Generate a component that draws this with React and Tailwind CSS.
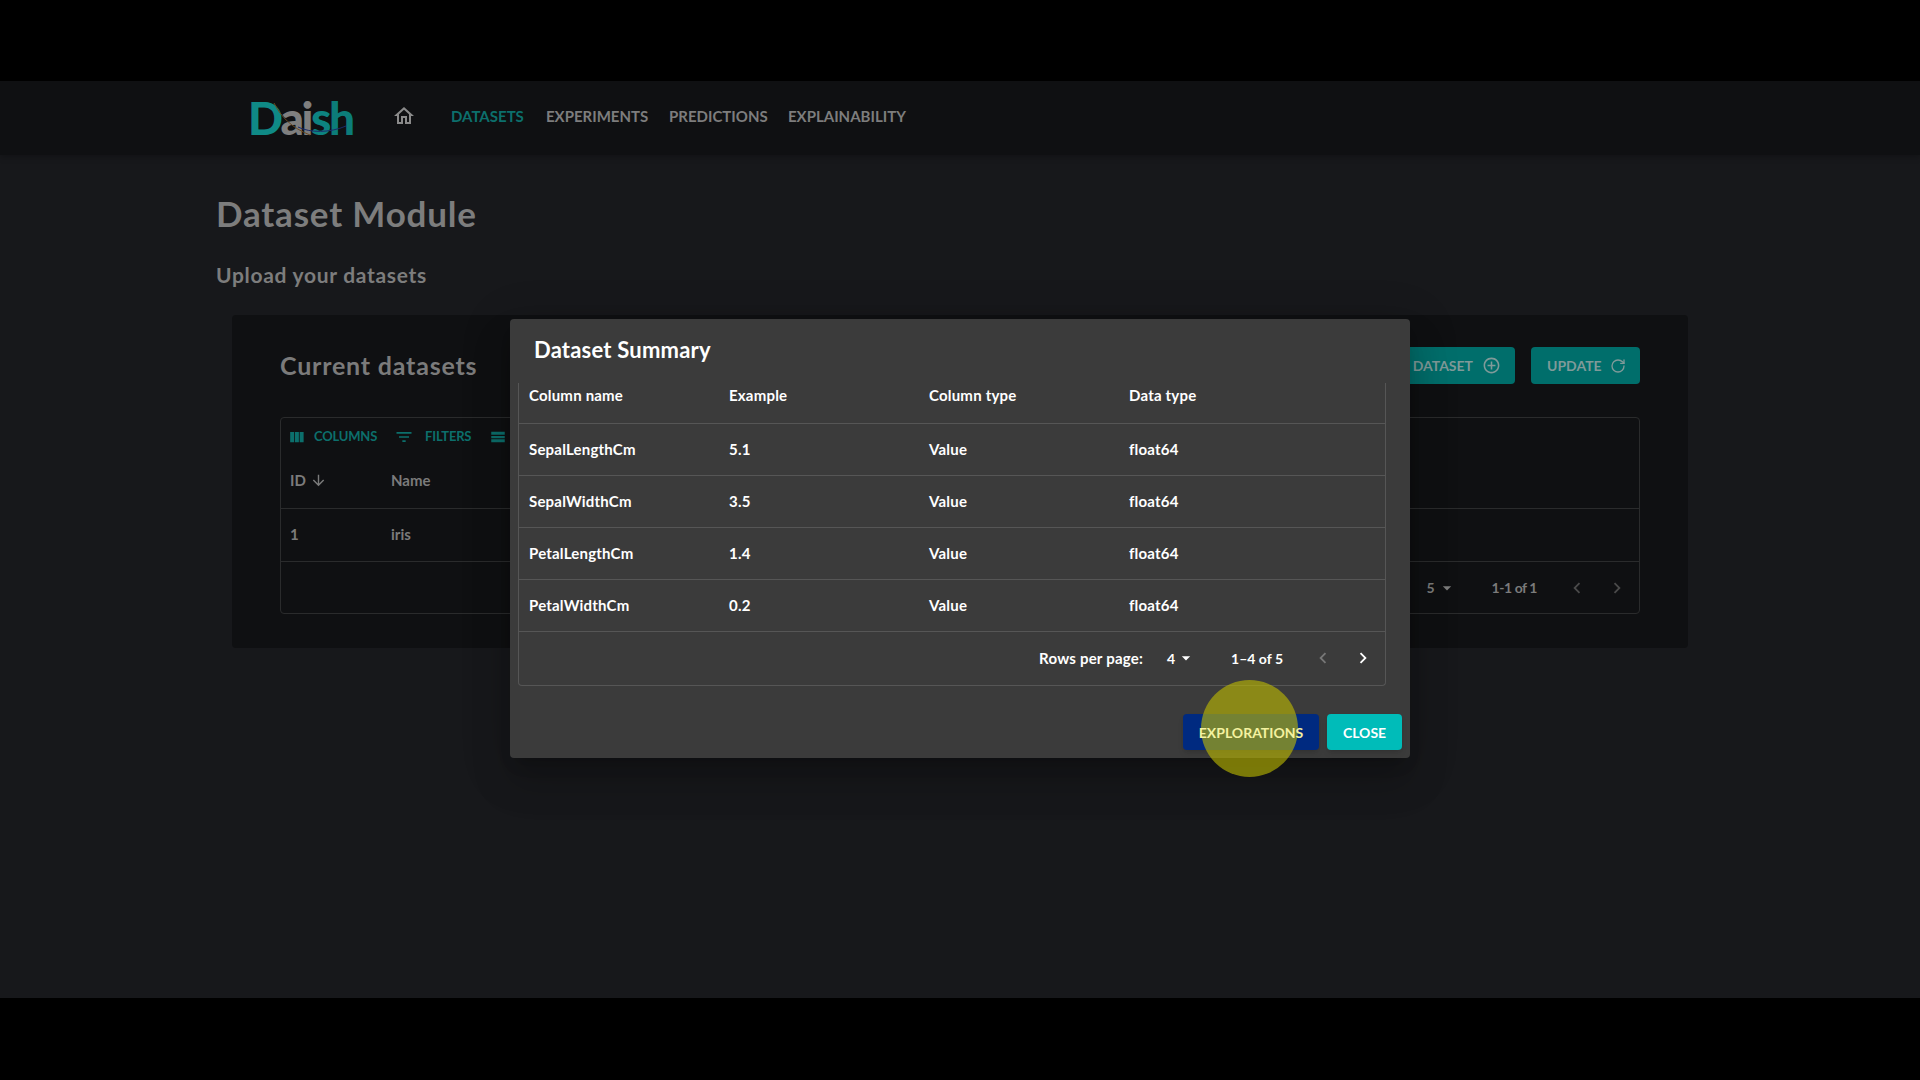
import { RotateCw } from 'lucide-react';

const columns = ['Column name', 'Example', 'Column type', 'Data type'];

const summaryRows = [
  ['SepalLengthCm', '5.1', 'Value', 'float64'],
  ['SepalWidthCm', '3.5', 'Value', 'float64'],
  ['PetalLengthCm', '1.4', 'Value', 'float64'],
  ['PetalWidthCm', '0.2', 'Value', 'float64'],
];

const navLinks = [
  { label: 'DATASETS', className: 'text-[#0c6f6c] w-[73px]' },
  { label: 'EXPERIMENTS', className: 'text-[#7d7d7d] w-[101px]' },
  { label: 'PREDICTIONS', className: 'text-[#7d7d7d] w-[97px]' },
  { label: 'EXPLAINABILITY', className: 'text-[#7d7d7d] w-[115px]' },
];

function MuiIcon({ d, className }) {
  return (
    <svg viewBox="0 0 24 24" fill="currentColor" className={className}>
      <path d={d} />
    </svg>
  );
}

const chevronLeft = 'M15.41 7.41L14 6l-6 6 6 6 1.41-1.41L10.83 12z';
const chevronRight = 'M10 6L8.59 7.41 13.17 12l-4.58 4.59L10 18l6-6z';
const caretDown = 'M7 10l5 5 5-5z';

function Logo() {
  return (
    <div className="relative w-[102px] h-[46px] flex items-start">
      <div className="flex mt-[5px] text-[46px] leading-[40px] font-black tracking-[-2.5px]">
        <span className="text-[#0f8a86]">D</span>
        <span className="text-[#7f7f7f]">a</span>
        <span className="text-[#7f7f7f]">i</span>
        <span className="text-[#0d8380]">s</span>
        <span className="text-[#0c7c79]">h</span>
      </div>
      {/* swoosh under the word */}
      <svg viewBox="0 0 102 46" fill="none" className="absolute inset-0 w-[102px] h-[46px]">
        <path d="M26 10C33 24 44 35 62 42" stroke="#6b4a22" strokeWidth="1" />
        <path d="M50 34C62 40 82 40 98 33" stroke="#1b2a6b" strokeWidth="1" />
      </svg>
    </div>
  );
}

function TopNav() {
  return (
    <nav className="h-[74px] bg-[#0f1012] shadow-[0_2px_6px_rgba(0,0,0,0.25)] flex items-center pl-[248px] pb-[4px]">
      <Logo />
      <MuiIcon
        d="M12 5.69l5 4.5V18h-2v-6H9v6H7v-7.81l5-4.5M12 3L2 12h3v8h6v-6h2v6h6v-8h3L12 3z"
        className="w-[24px] h-[24px] ml-[42px] text-[#8a8a8a]"
      />
      <div className="flex gap-[22px] ml-[35px]">
        {navLinks.map((link) => (
          <span key={link.label} className={`text-[15px] font-bold whitespace-nowrap ${link.className}`}>
            {link.label}
          </span>
        ))}
      </div>
    </nav>
  );
}

function DatasetsCard() {
  return (
    <section className="ml-[232px] mt-[26px] w-[1456px] h-[333px] bg-[#0f1012] rounded px-[48px] pt-[32px]">
      <div className="flex items-center h-[37px]">
        <h2 className="text-[25px] font-bold tracking-[0.8px] text-[#7b7b7b]">Current datasets</h2>
        <div className="ml-auto flex gap-[16px]">
          <button className="h-[37px] pl-[20px] pr-[14px] flex items-center gap-[9px] rounded bg-[#006e6b] text-[14px] font-bold text-[#7f9a99]">
            ADD NEW DATASET
            <MuiIcon
              d="M13 7h-2v4H7v2h4v4h2v-4h4v-2h-4V7zm-1-5C6.48 2 2 6.48 2 12s4.48 10 10 10 10-4.48 10-10S17.52 2 12 2zm0 18c-4.41 0-8-3.59-8-8s3.59-8 8-8 8 3.59 8 8-3.59 8-8 8z"
              className="w-[19px] h-[19px]"
            />
          </button>
          <button className="h-[37px] w-[109px] pl-[16px] flex items-center gap-[8px] rounded bg-[#006e6b] text-[14px] font-bold text-[#7f9a99]">
            UPDATE
            <RotateCw size={16} />
          </button>
        </div>
      </div>

      <div className="mt-[33px] h-[197px] border border-[#2a2b2c] rounded flex flex-col">
        <div className="h-[38px] pl-[6px] flex items-center text-[#0c6f6c] text-[13px] font-bold tracking-[-0.2px]">
          <MuiIcon d="M10 18h5V5h-5v13zm-6 0h5V5H4v13zM16 5v13h5V5h-5z" className="w-[19px] h-[19px]" />
          <span className="ml-[8px]">COLUMNS</span>
          <MuiIcon d="M10 18h4v-2h-4v2zM3 6v2h18V6H3zm3 7h12v-2H6v2z" className="w-[20px] h-[20px] ml-[17px]" />
          <span className="ml-[11px]">FILTERS</span>
          <MuiIcon d="M3 5h18v4H3zM3 10.5h18v3H3zM3 15h18v4H3z" className="w-[18px] h-[18px] ml-[18px]" />
        </div>
        <div className="h-[53px] flex items-center pl-[9px] pb-[4px] border-b border-[#2a2b2c] text-[#7b7b7b] text-[15px] font-bold">
          <span className="flex items-center w-[101px]">
            ID
            <MuiIcon d="M20 12l-1.41-1.41L13 16.17V4h-2v12.17l-5.58-5.59L4 12l8 8 8-8z" className="w-[17px] h-[17px] ml-[4px]" />
          </span>
          <span>Name</span>
        </div>
        <div className="h-[53px] flex items-center pl-[9px] pb-[2px] border-b border-[#2a2b2c] text-[#7b7b7b] text-[15px] font-bold">
          <span className="w-[101px]">1</span>
          <span>iris</span>
        </div>
        <div className="flex-1 flex items-center justify-end text-[#7b7b7b] text-[14px] font-bold pr-[11px]">
          <span>5</span>
          <MuiIcon d={caretDown} className="w-[20px] h-[20px] ml-[2px]" />
          <span className="ml-[35px] tracking-[-0.45px]">1-1 of 1</span>
          <MuiIcon d={chevronLeft} className="w-[22px] h-[22px] ml-[29px] text-[#4a4a4a]" />
          <MuiIcon d={chevronRight} className="w-[22px] h-[22px] ml-[18px] text-[#4a4a4a]" />
        </div>
      </div>
    </section>
  );
}

function SummaryModal() {
  return (
    <div className="absolute left-[510px] top-[238px] w-[900px] h-[439px] bg-[#3b3b3b] rounded shadow-[0_11px_15px_-7px_rgba(0,0,0,0.2),0_24px_38px_3px_rgba(0,0,0,0.14),0_9px_46px_8px_rgba(0,0,0,0.12)] flex flex-col">
      <h3 className="h-[64px] pl-[24px] pt-[16px] text-[22px] leading-[30px] font-bold tracking-[0.2px] text-white">Dataset Summary</h3>
      <div className="ml-[8px] w-[868px] h-[303px] border-x border-b border-[#565656] rounded-b flex flex-col">
        <table className="w-full table-fixed border-collapse text-[15px] tracking-[0.2px] font-bold text-white">
          <colgroup>
            <col className="w-[200px]" />
            <col className="w-[200px]" />
            <col className="w-[200px]" />
            <col />
          </colgroup>
          <thead>
            <tr className="h-[40px] border-b border-[#565656] align-top">
              {columns.map((col) => (
                <th key={col} className="pl-[10px] pt-[1px] text-left font-bold">
                  {col}
                </th>
              ))}
            </tr>
          </thead>
          <tbody>
            {summaryRows.map((row) => (
              <tr key={row[0]} className="h-[52px] border-b border-[#565656]">
                {row.map((cell) => (
                  <td key={cell} className="pl-[10px]">
                    {cell}
                  </td>
                ))}
              </tr>
            ))}
          </tbody>
        </table>
        <div className="flex-1 flex items-center justify-end pr-[11px] text-[14px] font-bold text-white">
          <span className="text-[15px] tracking-[0.2px]">Rows per page:</span>
          <span className="ml-[24px]">4</span>
          <MuiIcon d={caretDown} className="w-[20px] h-[20px] ml-[1px]" />
          <span className="ml-[35px]">1–4 of 5</span>
          <MuiIcon d={chevronLeft} className="w-[22px] h-[22px] ml-[29px] text-[#777777]" />
          <MuiIcon d={chevronRight} className="w-[22px] h-[22px] ml-[18px]" />
        </div>
      </div>
      <div className="flex-1 flex items-start justify-end gap-[8px] pr-[8px] pt-[28px]">
        <button className="h-[36px] w-[136px] rounded bg-[#002a80] text-[14px] font-bold text-white shadow-md">
          {/* label stays bright over the click highlight */}
          <span className="relative z-10 text-[#f4f2a0]">EXPLORATIONS</span>
        </button>
        <button className="h-[36px] w-[75px] rounded bg-[#00bcb9] text-[14px] font-bold text-white shadow-md">
          CLOSE
        </button>
      </div>
    </div>
  );
}

export default function App() {
  return (
    <div className="h-[1080px] bg-black overflow-hidden font-['Lato',sans-serif]">
      <div className="h-[81px]" />
      <main className="relative h-[917px] bg-[#17181b]">
        <TopNav />
        <h1 className="ml-[216px] mt-[36px] text-[35px] leading-[44px] font-bold tracking-[0.8px] text-[#7d7d7d]">Dataset Module</h1>
        <p className="ml-[216px] mt-[26px] text-[21px] leading-[28px] font-bold tracking-[0.7px] text-[#7d7d7d]">Upload your datasets</p>
        <DatasetsCard />
        <SummaryModal />
        {/* click highlight from the recording */}
        <div className="absolute left-[1201px] top-[599px] w-[97px] h-[97px] rounded-full bg-[rgba(194,190,0,0.6)]" />
      </main>
    </div>
  );
}
